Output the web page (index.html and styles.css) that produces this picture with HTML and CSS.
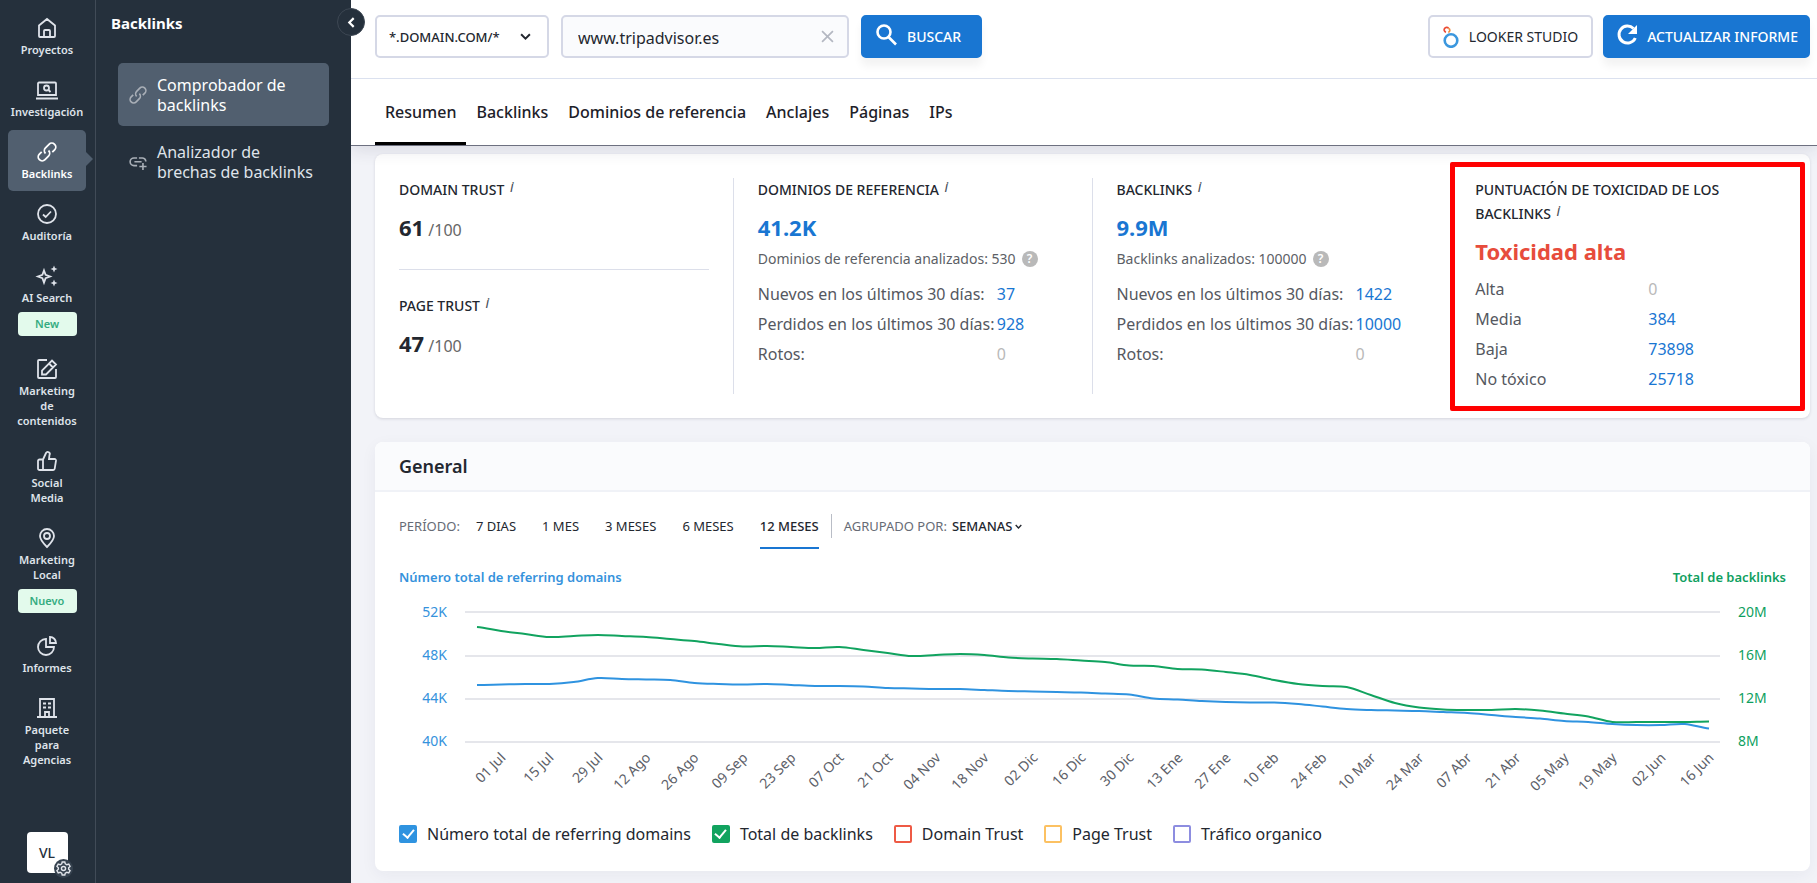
FILE: index.html
```html
<!DOCTYPE html>
<html lang="es">

<head>
    <meta charset="UTF-8">
    <meta name="viewport" content="width=device-width, initial-scale=1.0">
    <title>Comprobador de backlinks</title>
    <link rel="stylesheet" href="styles.css">
</head>

<body>
    <div class="app">
        <nav class="rail">
            <a class="rail-item" href="#">
                <svg viewBox="0 0 20 20"><path d="M2 18V7.500L10 1l8 6.500V18a1 1 0 0 1-1 1H3a1 1 0 0 1-1-1zM7 19v-6a1 1 0 0 1 1-1h4a1 1 0 0 1 1 1v6"/></svg>
                <span>Proyectos</span>
            </a>
            <a class="rail-item" href="#">
                <svg class="wide" viewBox="0 0 22 20"><path d="M3 2.500h16a1 1 0 0 1 1 1V15H2V3.500a1 1 0 0 1 1-1zM0 18.500h22"/><circle cx="10.500" cy="8" r="2.500"/><path d="M12.500 10l2 2"/></svg>
                <span>Investigación</span>
            </a>
            <a class="rail-item active" href="#">
                <svg viewBox="0 0 20 20"><path d="M8.500 11.500a4 4 0 0 1 0-5.600L12 2.300a3.900 3.900 0 0 1 5.600 5.600L15.300 10.200M11.500 8.500a4 4 0 0 1 0 5.600L8 17.700a3.900 3.900 0 0 1-5.600-5.600L4.700 9.800"/></svg>
                <span>Backlinks</span>
            </a>
            <a class="rail-item" href="#">
                <svg viewBox="0 0 20 20"><circle cx="10" cy="10" r="9"/><path d="M6 10.500l2.700 2.500L14 7.500"/></svg>
                <span>Auditoría</span>
            </a>
            <a class="rail-item" href="#">
                <svg class="wide" viewBox="0 0 22 20"><path d="M8 4.500l1.600 4.400L14 10.500l-4.400 1.600L8 16.500l-1.600-4.400L2 10.500l4.400-1.600z"/><path class="solid" d="M18-.500l1 2.500 2.500 1-2.500 1-1 2.500-1-2.500-2.500-1 2.500-1zM18 13.500l1 2.500 2.500 1-2.500 1-1 2.500-1-2.500-2.500-1 2.500-1z"/></svg>
                <span>AI Search</span>
                <span class="pill">New</span>
            </a>
            <a class="rail-item" href="#">
                <svg viewBox="0 0 20 20"><path d="M10 1H2a1 1 0 0 0-1 1v16a1 1 0 0 0 1 1h16a1 1 0 0 0 1-1v-8M5 15.500v-4L15 1.500l4 4-10 10zM12 4.500l4 4"/></svg>
                <span>Marketing<br>de<br>contenidos</span>
            </a>
            <a class="rail-item" href="#">
                <svg viewBox="0 0 20 20"><path d="M6 8.500L9 2a2 2 0 0 1 3.500 2L12 8h5.500A1.500 1.500 0 0 1 19 9.700l-1.300 8A1.500 1.500 0 0 1 16.200 19H2.500A1.500 1.500 0 0 1 1 17.500V10a1.500 1.500 0 0 1 1.500-1.500zM6 8.500V19"/></svg>
                <span>Social<br>Media</span>
            </a>
            <a class="rail-item" href="#">
                <svg viewBox="0 0 20 20"><path d="M10 19C5 14 3 11 3 8a7 7 0 0 1 14 0c0 3-2 6-7 11z"/><circle cx="10" cy="8" r="3"/></svg>
                <span>Marketing<br>Local</span>
                <span class="pill">Nuevo</span>
            </a>
            <a class="rail-item" href="#">
                <svg viewBox="0 0 20 20"><path d="M9 3a8 8 0 1 0 8 8H9zM13 1v6h6a6 6 0 0 0-6-6z"/></svg>
                <span>Informes</span>
            </a>
            <a class="rail-item" href="#">
                <svg viewBox="0 0 20 20"><path d="M3 19V1h14v18M0 19h20M8 19v-5h4v5M6 5.500h3M11 5.500h3M6 9.500h3M11 9.500h3"/></svg>
                <span>Paquete<br>para<br>Agencias</span>
            </a>
            <button class="avatar" type="button">VL
                <span class="gear">
                    <svg viewBox="0 0 16 16"><path d="M6.600 1h2.800l.500 2 1.700 1 2-.600L15 5.800 13.500 7.200v1.600L15 10.200l-1.400 2.400-2-.600-1.700 1-.500 2H6.600l-.500-2-1.700-1-2 .600L1 10.200l1.500-1.400V7.200L1 5.800l1.400-2.400 2 .600 1.700-1z"/><circle cx="8" cy="8" r="2.200"/></svg>
                </span>
            </button>
        </nav>

        <aside class="submenu">
            <h2>Backlinks</h2>
            <a class="sub-item active" href="#">
                <svg viewBox="0 0 20 20"><path d="M8.500 11.500a4 4 0 0 1 0-5.600L12 2.300a3.900 3.900 0 0 1 5.600 5.600L15.300 10.200M11.500 8.500a4 4 0 0 1 0 5.600L8 17.700a3.900 3.900 0 0 1-5.600-5.600L4.700 9.800"/></svg>
                <span>Comprobador de backlinks</span>
            </a>
            <a class="sub-item" href="#">
                <svg viewBox="0 0 20 20"><path d="M9 5.500H5.500a4 4 0 0 0 0 8.500H9M11 5.500h3.500a4 4 0 0 1 4.200 4M6 9.700h8M15.500 11v8M11.500 15h8"/></svg>
                <span>Analizador de brechas de backlinks</span>
            </a>
            <button class="collapse" type="button" aria-label="Contraer">
                <svg viewBox="0 0 10 10"><path d="M7 1L3 5l4 4"/></svg>
            </button>
        </aside>

        <main class="main">
            <header class="header">
                <form class="toolbar">
                    <div class="select-box">
                        <select aria-label="Tipo de dominio">
                            <option>*.DOMAIN.COM/*</option>
                        </select>
                        <svg viewBox="0 0 10 10"><path d="M1 3l4 4 4-4"/></svg>
                    </div>
                    <div class="url-box">
                        <input type="text" value="www.tripadvisor.es" aria-label="Dominio">
                        <button type="button" aria-label="Borrar">
                            <svg viewBox="0 0 12 12"><path d="M1 1l10 10M11 1L1 11"/></svg>
                        </button>
                    </div>
                    <button class="btn btn-blue btn-search" type="button">
                        <svg viewBox="0 0 24 24"><circle cx="9" cy="9" r="6.500"/><path d="M13.500 14l7.500 7.500"/></svg>
                        BUSCAR
                    </button>
                    <button class="btn btn-line" type="button">
                        <svg viewBox="0 0 16 22"><circle cx="8" cy="14.500" r="6.300" stroke="#3b97de" stroke-width="2.600"/><path d="M3 6.200A2.500 2.500 0 1 1 5.600 2.200" stroke="#ea4b35" stroke-width="1.700"/><path d="M5.300 2.200a2.200 2.200 0 0 1 0 4.200" stroke="#f08b3e" stroke-width="1.700"/></svg>
                        LOOKER STUDIO
                    </button>
                    <button class="btn btn-blue" type="button">
                        <svg viewBox="0 0 24 24"><path d="M18.500 5.500A8.500 8.500 0 1 0 20.300 15" stroke-width="3"/><path class="fill" d="M22 2v9h-9z"/></svg>
                        ACTUALIZAR INFORME
                    </button>
                </form>
                <nav class="tabs">
                    <a class="active" href="#">Resumen</a>
                    <a href="#">Backlinks</a>
                    <a href="#">Dominios de referencia</a>
                    <a href="#">Anclajes</a>
                    <a href="#">Páginas</a>
                    <a href="#">IPs</a>
                </nav>
            </header>

            <section class="card stats">
                <div class="stat">
                    <h3>DOMAIN TRUST <i>i</i></h3>
                    <p class="score"><b>61</b> /100</p>
                    <hr>
                    <h3>PAGE TRUST <i>i</i></h3>
                    <p class="score"><b>47</b> /100</p>
                </div>
                <div class="stat">
                    <h3>DOMINIOS DE REFERENCIA <i>i</i></h3>
                    <p class="score"><a href="#">41.2K</a></p>
                    <p class="note">Dominios de referencia analizados: 530 <span class="help">?</span></p>
                    <table>
                        <tr><th>Nuevos en los últimos 30 días:</th><td><a href="#">37</a></td></tr>
                        <tr><th>Perdidos en los últimos 30 días:</th><td><a href="#">928</a></td></tr>
                        <tr><th>Rotos:</th><td>0</td></tr>
                    </table>
                </div>
                <div class="stat">
                    <h3>BACKLINKS <i>i</i></h3>
                    <p class="score"><a href="#">9.9M</a></p>
                    <p class="note">Backlinks analizados: 100000 <span class="help">?</span></p>
                    <table>
                        <tr><th>Nuevos en los últimos 30 días:</th><td><a href="#">1422</a></td></tr>
                        <tr><th>Perdidos en los últimos 30 días:</th><td><a href="#">10000</a></td></tr>
                        <tr><th>Rotos:</th><td>0</td></tr>
                    </table>
                </div>
                <div class="stat toxicity">
                    <h3>PUNTUACIÓN DE TOXICIDAD DE LOS BACKLINKS <i>i</i></h3>
                    <p class="score danger">Toxicidad alta</p>
                    <table>
                        <tr><th>Alta</th><td>0</td></tr>
                        <tr><th>Media</th><td><a href="#">384</a></td></tr>
                        <tr><th>Baja</th><td><a href="#">73898</a></td></tr>
                        <tr><th>No tóxico</th><td><a href="#">25718</a></td></tr>
                    </table>
                </div>
            </section>

            <section class="card general">
                <h2>General</h2>
                <div class="general-body">
                    <div class="periods">
                        <span class="muted">PERÍODO:</span>
                        <button type="button">7 DIAS</button>
                        <button type="button">1 MES</button>
                        <button type="button">3 MESES</button>
                        <button type="button">6 MESES</button>
                        <button class="active" type="button">12 MESES</button>
                        <span class="group">
                            <label class="muted" for="group">AGRUPADO POR:</label>
                            <select id="group">
                                <option>SEMANAS</option>
                            </select>
                            <svg viewBox="0 0 10 10"><path d="M1 3l4 4 4-4"/></svg>
                        </span>
                    </div>

                    <div class="axis-titles">
                        <span class="blue">Número total de referring domains</span>
                        <span class="green">Total de backlinks</span>
                    </div>

                    <div class="chart">
                        <div class="axis blue">
                            <span>52K</span><span>48K</span><span>44K</span><span>40K</span>
                        </div>
                        <div class="plot">
                            <svg viewBox="0 0 1255 130" preserveAspectRatio="none">
                                <path class="grid" d="M0 0H1255M0 44H1255M0 87H1255M0 130H1255"/>
                                <path class="line-green" id="line-backlinks"/>
                                <path class="line-blue" id="line-domains"/>
                            </svg>
                            <div class="dates" id="dates"></div>
                        </div>
                        <div class="axis green">
                            <span>20M</span><span>16M</span><span>12M</span><span>8M</span>
                        </div>
                    </div>

                    <div class="legend">
                        <label><input class="c-blue" type="checkbox" checked>Número total de referring domains</label>
                        <label><input class="c-green" type="checkbox" checked>Total de backlinks</label>
                        <label><input class="c-red" type="checkbox">Domain Trust</label>
                        <label><input class="c-yellow" type="checkbox">Page Trust</label>
                        <label><input class="c-violet" type="checkbox">Tráfico organico</label>
                    </div>
                </div>
            </section>
        </main>
    </div>
    <script src="chart.js"></script>
</body>

</html>
```

FILE: styles.css
```css
* {
    box-sizing: border-box;
}

body {
    margin: 0;
    background: #f2f3f8;
    color: #23272f;
    font-family: "Noto Sans", "Open Sans", sans-serif;
    font-size: 16px;
}

h2,
h3,
p {
    margin: 0;
}

a {
    color: #1976d2;
    text-decoration: none;
}

button,
input,
select {
    font-family: inherit;
    color: inherit;
}

svg {
    fill: none;
    stroke: currentColor;
}

.app {
    display: flex;
    min-height: 100vh;
}

/* left rail */

.rail {
    display: flex;
    flex-direction: column;
    align-items: center;
    gap: 1px;
    flex: 0 0 96px;
    padding: 6px 9px 10px 8px;
    background: #25303c;
    border-right: 1px solid #414b57;
}

.rail-item {
    position: relative;
    display: flex;
    flex-direction: column;
    align-items: center;
    width: 100%;
    padding: 12px 0 10px;
    border-radius: 5px;
    color: #dfe3ea;
    font-size: 11px;
    font-weight: 600;
    line-height: 15px;
    text-align: center;
}

.rail-item svg {
    width: 20px;
    height: 20px;
    margin-bottom: 4px;
    stroke-width: 1.8;
    overflow: visible;
}

.rail-item svg.wide {
    width: 22px;
}

.rail-item .solid {
    fill: currentColor;
    stroke: none;
}

.rail-item.active,
.sub-item.active {
    background: #515f6f;
    color: #fff;
}

.rail-item.active::after {
    content: "";
    position: absolute;
    left: 100%;
    top: 22px;
    border: 7px solid transparent;
    border-left-color: #515f6f;
    border-right: 0;
}

.rail-item .pill {
    width: 59px;
    margin-top: 7px;
    border-radius: 4px;
    background: #e3faec;
    color: #35ac80;
    line-height: 24px;
}

.avatar {
    position: relative;
    width: 41px;
    height: 41px;
    margin-top: auto;
    padding: 0;
    border: 0;
    border-radius: 4px;
    background: #fff;
    color: #25303c;
    font-size: 14px;
    font-weight: 500;
}

.gear {
    position: absolute;
    right: -5px;
    bottom: -5px;
    display: flex;
    padding: 2px;
    border-radius: 50%;
    background: #36424f;
    color: #e3e6ec;
}

.gear svg {
    width: 15px;
    height: 15px;
    stroke-width: 1.5;
}

/* submenu */

.submenu {
    position: relative;
    z-index: 2;
    flex: 0 0 255px;
    padding: 12px 22px;
    background: #25303c;
    color: #fff;
}

.submenu h2 {
    margin: 0 -7px 29px;
    font-size: 15px;
    font-weight: 700;
    line-height: 22px;
}

.sub-item {
    display: flex;
    align-items: center;
    gap: 10px;
    height: 63px;
    margin-bottom: 4px;
    padding: 0 16px 0 11px;
    border-radius: 5px;
    color: #dfe3ea;
    font-size: 16px;
    line-height: 20px;
}

.sub-item svg {
    flex: 0 0 18px;
    height: 18px;
    stroke: #a9afb7;
    stroke-width: 1.8;
}

.collapse {
    position: absolute;
    top: 8px;
    right: -14px;
    width: 28px;
    height: 28px;
    padding: 0;
    border: 1px solid #3d4753;
    border-radius: 50%;
    background: #25303c;
}

.collapse svg {
    display: block;
    width: 11px;
    height: 11px;
    margin: auto;
    stroke-width: 2;
}

/* header */

.main {
    flex: 1;
    min-width: 0;
}

.header {
    position: relative;
    z-index: 1;
    background: #fff;
    border-bottom: 1px solid #6d7080;
    box-shadow: 0 4px 16px rgba(40, 40, 70, .12);
}

.toolbar {
    display: flex;
    gap: 12px;
    padding: 15px 7px 20px 24px;
    border-bottom: 1px solid #dbe1ef;
}

.select-box,
.url-box {
    position: relative;
    flex: 0 0 174px;
    height: 43px;
}

.url-box {
    flex-basis: 288px;
}

.select-box select,
.url-box input {
    width: 100%;
    height: 100%;
    padding: 0 12px;
    border: 2px solid #d5d8e6;
    border-radius: 5px;
    background: #fff;
    appearance: none;
    font-size: 13px;
    font-weight: 500;
}

.url-box input {
    padding: 3px 15px 0;
    background: #fafbfd;
    font-size: 16px;
    font-weight: 400;
}

.select-box svg {
    position: absolute;
    right: 18px;
    top: 16px;
    width: 11px;
    height: 11px;
    stroke-width: 1.8;
    pointer-events: none;
}

.url-box button {
    position: absolute;
    right: 15px;
    top: 15px;
    padding: 0;
    border: 0;
    background: none;
    color: #b4b8c2;
}

.url-box button svg {
    display: block;
    width: 13px;
    height: 13px;
    stroke-width: 1.6;
}

.btn {
    display: flex;
    align-items: center;
    gap: 8px;
    height: 43px;
    padding: 0 13px;
    border: 2px solid #d5d8e6;
    border-radius: 5px;
    background: #fff;
    font-size: 14px;
    font-weight: 400;
    white-space: nowrap;
}

.btn-line {
    gap: 10px;
    margin-left: auto;
    margin-right: -2px;
}

.btn-line svg {
    width: 16px;
    height: 22px;
}

.btn-blue {
    padding: 0 10px;
    border-color: #1976d2;
    background: #1976d2;
    color: #fff;
    font-weight: 500;
    box-shadow: 0 8px 8px rgba(0, 0, 0, .05);
}

.btn-search {
    padding: 0 19px 0 12px;
}

.btn-blue svg {
    width: 24px;
    height: 24px;
    stroke-width: 2.6;
    margin-top: -4px;
}

.btn-blue .fill {
    fill: #fff;
    stroke: none;
}

.tabs {
    display: flex;
    padding-left: 24px;
}

.tabs a {
    padding: 3px 10px 0;
    border-bottom: 3px solid transparent;
    color: #1d2129;
    font-size: 16px;
    font-weight: 500;
    line-height: 60px;
}

.tabs a.active {
    border-color: #000;
}

/* cards */

.card {
    margin: 8px 7px 24px 24px;
    border-radius: 8px;
    background: #fff;
    box-shadow: 0 1px 3px rgba(40, 40, 70, .15);
}

.stats {
    display: grid;
    grid-template-columns: repeat(4, 1fr);
    padding: 24px 0;
}

.stat {
    position: relative;
    min-height: 216px;
    padding: 0 24px;
    border-right: 1px solid #dcdfea;
}

.stat:nth-child(n+3) {
    border-right: 0;
}

.stat h3 {
    color: #23272f;
    font-size: 14px;
    font-weight: 500;
    line-height: 24px;
}

.stat h3 i {
    position: relative;
    top: -3px;
    margin-left: 2px;
    color: #454d58;
    font-weight: 400;
}

.score {
    padding: 9px 0 11px;
    color: #666;
    font-size: 16px;
    line-height: 32px;
}

.score b,
.score a,
.score.danger {
    font-size: 22px;
    font-weight: 700;
}

.score b {
    color: #23272f;
}

.score.danger {
    color: #e74c3c;
}

.stat hr {
    margin: 12px 0 24px;
    border: 0;
    border-top: 1px solid #dcdfea;
}

.note {
    display: flex;
    align-items: center;
    gap: 6px;
    margin-top: -10px;
    color: #5c5f66;
    font-size: 14px;
    line-height: 24px;
    white-space: nowrap;
}

.help {
    width: 16px;
    height: 16px;
    border-radius: 50%;
    background: #b9b9b9;
    color: #fff;
    font-size: 12px;
    font-weight: 600;
    line-height: 16px;
    text-align: center;
}

.stat table {
    margin-top: 8px;
    border-collapse: collapse;
    color: #55585f;
    white-space: nowrap;
}

.stat th,
.stat td {
    height: 30px;
    padding: 0;
    font-weight: 400;
    text-align: left;
}

.stat th {
    width: 239px;
}

.stat td {
    color: #b9b9b9;
}

.stat.toxicity table {
    margin-top: 0;
}

.toxicity .score {
    padding-bottom: 7px;
}

.stat.toxicity th {
    width: 173px;
}

/* highlight frame */
.toxicity::after {
    content: "";
    position: absolute;
    inset: -16px 5px -17px -1px;
    border: 5px solid #f00;
    border-radius: 2px;
    pointer-events: none;
}

.general {
    margin-bottom: 12px;
    box-shadow: 0 4px 16px rgba(40, 40, 70, .05);
}

.general h2 {
    padding: 0 24px;
    border-bottom: 2px solid #f0f2f7;
    border-radius: 8px 8px 0 0;
    background: #fafbfd;
    font-size: 18px;
    font-weight: 600;
    line-height: 48px;
}

.general-body {
    padding: 16px 24px 24px;
}

.periods {
    display: flex;
    align-items: flex-start;
    gap: 26px;
    font-size: 13px;
    line-height: 36px;
}

.periods .muted {
    color: #666b75;
}

.periods > .muted {
    margin-right: -10px;
}

.periods button {
    padding: 0 0 3px;
    border: 0;
    border-bottom: 2px solid transparent;
    background: none;
    font-size: 13px;
    line-height: 36px;
}

.periods .active {
    border-bottom-color: #1976d2;
    font-weight: 500;
}

.group {
    display: flex;
    align-items: center;
    gap: 5px;
    height: 24px;
    margin: 6px 0 0 -14px;
    padding-left: 12px;
    border-left: 1px solid #b9bdc6;
}

.group select {
    padding: 0;
    border: 0;
    background: none;
    appearance: none;
    font-size: 13px;
    font-weight: 500;
}

.group svg {
    width: 7px;
    height: 7px;
    margin-left: -3px;
    stroke-width: 2;
}

.axis-titles {
    display: flex;
    justify-content: space-between;
    margin-top: 18px;
    font-size: 13px;
    font-weight: 600;
    line-height: 20px;
}

.blue {
    color: #3592dc;
}

.green {
    color: #0f9f5f;
}

.chart {
    display: grid;
    grid-template-columns: 66px 1fr 66px;
    margin-top: 13px;
}

.axis {
    display: flex;
    flex-direction: column;
    gap: 19px;
    padding-left: 18px;
    font-size: 14px;
    line-height: 24px;
}

.axis.blue {
    padding: 0 18px 0 0;
    text-align: right;
}

.plot {
    padding-top: 12px;
}

.plot svg {
    display: block;
    width: 100%;
    height: 130px;
    overflow: visible;
}

.plot path {
    vector-effect: non-scaling-stroke;
    stroke-width: 2;
}

.plot .grid {
    stroke: #e5e6eb;
}

.plot .line-green {
    stroke: #11a35f;
}

.plot .line-blue {
    stroke: #2f93e0;
}

.dates {
    position: relative;
    height: 66px;
}

.dates span {
    position: absolute;
    top: 4px;
    margin-left: 2px;
    color: #5c6068;
    font-size: 14px;
    line-height: 18px;
    white-space: nowrap;
    transform: translateX(-100%) rotate(-45deg);
    transform-origin: 100% 50%;
}

.legend {
    display: flex;
    flex-wrap: wrap;
    gap: 21px;
    margin-top: 13px;
}

.legend label {
    display: flex;
    align-items: center;
    gap: 10px;
    line-height: 26px;
}

.legend input {
    width: 18px;
    height: 18px;
    margin: 0;
    border: 2px solid var(--c);
    border-radius: 2px;
    background: #fff;
    appearance: none;
}

.legend input:checked {
    background: var(--c);
}

.legend input:checked::after {
    content: "";
    display: block;
    width: 5px;
    height: 9px;
    margin: 0 auto;
    border: solid #fff;
    border-width: 0 2px 2px 0;
    transform: rotate(40deg);
}

.c-blue {
    --c: #2f93e0;
}

.c-green {
    --c: #11a35f;
}

.c-red {
    --c: #ee5a45;
}

.c-yellow {
    --c: #fcc162;
}

.c-violet {
    --c: #8d8de0;
}
```

FILE: chart.js
```js
const PLOT_WIDTH = 1255
const FIRST = 12
const LAST = 1244

// distance from the top grid line, one value per week
const backlinks = [15, 19, 22, 25, 24, 23, 24, 25, 27, 29, 32, 34.5, 34, 35, 36, 35, 38, 41, 44, 43,
    42, 43, 45.5, 46.5, 47, 48.5, 50, 53.5, 54, 57, 57.5, 60, 63, 68, 72, 74, 75, 83, 91, 95.5,
    97.5, 98, 98, 97, 98.5, 101.5, 104.5, 110, 110, 110, 110, 109.5]

const domains = [73, 72.5, 72, 72, 70, 66, 67, 67.5, 68, 71, 72, 72.5, 72, 73, 74, 74, 74.5, 76, 76.5, 77,
    77, 78, 79, 79.5, 80, 80.5, 81.5, 82.5, 86.5, 87.5, 89, 90, 90.5, 90.5, 92, 94.5, 97, 98, 98.5, 99,
    100, 101, 103, 105, 106.5, 109, 110, 112, 113, 113, 112, 116.5]

const dates = ['01 Jul', '15 Jul', '29 Jul', '12 Ago', '26 Ago', '09 Sep', '23 Sep', '07 Oct', '21 Oct',
    '04 Nov', '18 Nov', '02 Dic', '16 Dic', '30 Dic', '13 Ene', '27 Ene', '10 Feb', '24 Feb', '10 Mar',
    '24 Mar', '07 Abr', '21 Abr', '05 May', '19 May', '02 Jun', '16 Jun']

const step = (LAST - FIRST) / (backlinks.length - 1)

function smoothPath(values) {
    let d = `M${FIRST} ${values[0]}`
    for (let i = 1; i < values.length; i++) {
        const x0 = FIRST + step * (i - 1)
        const x1 = FIRST + step * i
        const before = values[i - 2] ?? values[i - 1]
        const after = values[i + 1] ?? values[i]
        const c0 = values[i - 1] + (values[i] - before) / 6
        const c1 = values[i] - (after - values[i - 1]) / 6
        d += `C${x0 + step / 3} ${c0} ${x1 - step / 3} ${c1} ${x1} ${values[i]}`
    }
    return d
}

document.querySelector('#line-backlinks').setAttribute('d', smoothPath(backlinks))
document.querySelector('#line-domains').setAttribute('d', smoothPath(domains))

// every second week has a label
const holder = document.querySelector('#dates')
dates.forEach((text, i) => {
    const label = document.createElement('span')
    label.textContent = text
    label.style.left = (FIRST + step * (i * 2 + 1)) / PLOT_WIDTH * 100 + '%'
    holder.appendChild(label)
})
```
